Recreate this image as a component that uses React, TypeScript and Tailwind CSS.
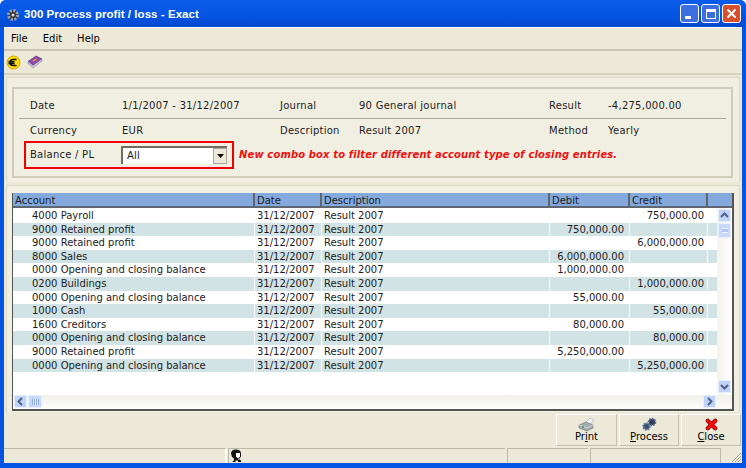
import React from "react";

const rows = [
  ["4000 Payroll", "", "750,000.00"],
  ["9000 Retained profit", "750,000.00", ""],
  ["9000 Retained profit", "", "6,000,000.00"],
  ["8000 Sales", "6,000,000.00", ""],
  ["0000 Opening and closing balance", "1,000,000.00", ""],
  ["0200 Buildings", "", "1,000,000.00"],
  ["0000 Opening and closing balance", "55,000.00", ""],
  ["1000 Cash", "", "55,000.00"],
  ["1600 Creditors", "80,000.00", ""],
  ["0000 Opening and closing balance", "", "80,000.00"],
  ["9000 Retained profit", "5,250,000.00", ""],
  ["0000 Opening and closing balance", "", "5,250,000.00"],
];

const headerCell =
  "h-[15px] bg-[#84aadd] border-r-2 border-b-2 border-[#5f6670] pl-[2px] leading-[16px] overflow-hidden";

function WinButton({ color, children }: { color: string; children: React.ReactNode }) {
  return (
    <div
      className={`w-[19px] h-[19px] rounded-[3px] border border-white flex items-center justify-center ${color}`}
    >
      {children}
    </div>
  );
}

function ScrollBtn({ d }: { d: string }) {
  return (
    <div className="w-[13px] h-[13px] bg-[#c1d3fb] border border-[#e8effd] flex items-center justify-center">
      <svg width="9" height="9" viewBox="0 0 9 9">
        <path d={d} fill="none" stroke="#4d6185" strokeWidth="2" />
      </svg>
    </div>
  );
}

function ToolButton({
  w,
  pre,
  u,
  rest,
  icon,
}: {
  w: string;
  pre?: string;
  u: string;
  rest: string;
  icon: React.ReactNode;
}) {
  return (
    <div
      className={`${w} h-[32px] bg-[#ece9d8] border border-t-white border-l-white border-r-[#c4c1b0] border-b-[#c4c1b0] flex flex-col items-center pt-[2px] leading-[12px] text-[10px] text-black`}
    >
      <div className="h-[14px] flex items-center">{icon}</div>
      <div>
        {pre}
        <span className="underline">{u}</span>
        {rest}
      </div>
    </div>
  );
}

export default function App() {
  return (
    <div
      className="w-[746px] h-[468px] overflow-hidden flex flex-col bg-[#0553e2] rounded-t-[6px] text-[10px] text-[#1c1c1c]"
      style={{ fontFamily: '"DejaVu Sans", Tahoma, sans-serif' }}
    >
      {/* Title bar */}
      <div className="h-[27px] shrink-0 flex items-center pl-[6px] pr-[5px] pt-[3px] bg-gradient-to-b from-[#0a5be8] via-[#0456e4] to-[#0349d0]">
        <svg width="14" height="14" viewBox="0 0 14 14">
          <circle cx="7" cy="7" r="4.500" fill="#333" stroke="#a8a8a8" strokeWidth="3" strokeDasharray="2 1.500" />
          <circle cx="7" cy="7" r="1.500" fill="#ddd" />
        </svg>
        <div
          className="ml-[4px] text-white font-bold text-[11.500px] tracking-[0.05px] whitespace-nowrap"
          style={{ fontFamily: '"Liberation Sans", sans-serif' }}
        >
          300 Process profit / loss - Exact
        </div>
        <div className="ml-auto flex gap-[2px] -mt-[3px]">
          <WinButton color="bg-[#3c6ee0]">
            <div className="w-[6px] h-[3px] bg-white mt-[8px] mr-[3px]" />
          </WinButton>
          <WinButton color="bg-[#3c6ee0]">
            <div className="w-[10px] h-[10px] border border-white border-t-[3px]" />
          </WinButton>
          <WinButton color="bg-[#d8502c]">
            <svg width="11" height="11" viewBox="0 0 11 11">
              <path d="M1.500 1.500l8 8M9.500 1.500l-8 8" stroke="#fff" strokeWidth="2" />
            </svg>
          </WinButton>
        </div>
      </div>

      {/* Window body */}
      <div className="flex-1 mx-[4px] mb-[5px] bg-[#ece9d8] border-t border-white flex flex-col min-h-0">
        {/* Menu */}
        <div className="h-[23px] shrink-0 flex items-center gap-[15px] pl-[7px] border-b-2 border-[#c9c6b6] text-[10px] text-black">
          <span>File</span>
          <span>Edit</span>
          <span>Help</span>
        </div>
        {/* Toolbar */}
        <div className="h-[24px] shrink-0 flex items-center gap-[6px] pl-[2px] border-b-2 border-[#d6d3c3]">
          <svg width="15" height="15" viewBox="0 0 15 15">
            <circle cx="7.500" cy="7.500" r="6.500" fill="#f8dc10" stroke="#e0a800" />
            <path d="M10.500 4.500H7a3 3 0 0 0 0 6h3.500M2.500 6.700h6M2.500 8.400h6" fill="none" stroke="#111" strokeWidth="1.500" />
          </svg>
          <svg width="16" height="14" viewBox="0 0 16 14">
            <path d="M1 6.500l8-5.500 6 3-9 6.500z" fill="#8e4aa8" stroke="#5b2d78" strokeWidth=".7" />
            <path d="M1 6.500v2l5 4.500 9-7V4l-9 6.500z" fill="#d5cbe0" stroke="#7a6a90" strokeWidth=".5" />
            <path d="M6 6l3.500-2" stroke="#f0b020" strokeWidth="1.300" />
          </svg>
        </div>

        {/* Form panel */}
        <div className="mx-[2px] mt-[2px] h-[105px] shrink-0 bg-[#f1efe2] border-t border-l border-r border-[#dcd9c9] pl-[5px] pt-[9px]">
          <div className="w-[721px] h-[91px] border-2 border-[#cfccbc] bg-[#f1efe2] flex flex-col text-[10px] leading-[12px]">
            <div className="h-[30px] shrink-0 pt-[4px] flex items-center mx-[5px] border-b border-[#aca899] tracking-[0.25px]">
              <span className="w-[103px] pl-[11px]">Date</span>
              <span className="w-[158px]">1/1/2007 - 31/12/2007</span>
              <span className="w-[79px]">Journal</span>
              <span className="w-[190px]">90 General journal</span>
              <span className="w-[59px]">Result</span>
              <span>-4,275,000.00</span>
            </div>
            <div className="h-[22px] shrink-0 pt-[1px] flex items-center mx-[5px] tracking-[0.25px]">
              <span className="w-[103px] pl-[11px]">Currency</span>
              <span className="w-[158px]">EUR</span>
              <span className="w-[79px]">Description</span>
              <span className="w-[190px]">Result 2007</span>
              <span className="w-[59px]">Method</span>
              <span>Yearly</span>
            </div>
            <div className="flex items-center">
              <div className="w-[210px] h-[28px] ml-[10px] border-2 border-[#f00000] flex items-center tracking-[0.25px]">
                <span className="w-[95px] pl-[4px]">Balance / PL</span>
                <div className="w-[106px] h-[18px] bg-white border-t-2 border-l-2 border-[#6f6d62] flex items-center justify-between">
                  <span className="pl-[4px]">All</span>
                  <div className="w-[14px] h-[16px] bg-[#ece9d8] border border-[#aca899] flex items-center justify-center">
                    <svg width="7" height="4" viewBox="0 0 7 4"><path d="M0 0h7L3.500 4z" fill="#000" /></svg>
                  </div>
                </div>
              </div>
              <span className="ml-[5px] font-bold italic text-[#f01010] text-[10px] tracking-[0.12px] whitespace-nowrap">
                New combo box to filter different account type of closing entries.
              </span>
            </div>
          </div>
        </div>

        {/* Grid panel */}
        <div className="mx-[2px] mt-[3px] h-[227px] shrink-0 bg-[#f1efe2] border-t border-l border-r border-[#dcd9c9] pl-[5px] pr-[5px] pt-[7px]">
          <div className="h-[218px] border-r-2 border-b-2 border-l border-[#555] bg-white flex flex-col">
            <div className="flex text-[#1a1a1a] shrink-0 h-[15px]">
              <div className={`${headerCell} w-[242px]`}>Account</div>
              <div className={`${headerCell} w-[67px]`}>Date</div>
              <div className={`${headerCell} w-[228px]`}>Description</div>
              <div className={`${headerCell} w-[80px]`}>Debit</div>
              <div className={`${headerCell} w-[78px]`}>Credit</div>
              <div className="h-[15px] flex-1 bg-[#84aadd] border-b-2 border-[#5f6670]" />
            </div>
            <div className="flex-1 flex min-h-0">
              <div className="flex-1 min-w-0 pt-[1px]">
                {rows.map((r, i) => (
                  <div
                    key={i}
                    className={`flex h-[13.6px] leading-[13.6px] ${i % 2 === 1 ? "bg-[#d2e3e5]" : "bg-white"}`}
                  >
                    <div className="w-[242px] pl-[19px] border-r border-white overflow-hidden whitespace-nowrap">{r[0]}</div>
                    <div className="w-[67px] pl-[2px] border-r border-white">31/12/2007</div>
                    <div className="w-[228px] pl-[2px] border-r border-white">Result 2007</div>
                    <div className="w-[80px] pr-[5px] text-right border-r border-white">{r[1]}</div>
                    <div className="w-[78px] pr-[3px] text-right border-r border-white">{r[2]}</div>
                    <div className="flex-1" />
                  </div>
                ))}
              </div>
              <div className="w-[15px] shrink-0 bg-gradient-to-r from-[#f4f3ee] to-[#fdfdfb] flex flex-col items-center pt-[1px] pb-[2px]">
                <ScrollBtn d="M1 6l3.500-3.500L8 6" />
                <div className="w-[13px] h-[15px] mt-[1px] bg-[#c9d8fb] border border-[#e8effd] flex items-center justify-center">
                  <div className="w-[6px] h-[5px] border-y border-[#eef3ff] bg-[#b3c7f5]" />
                </div>
                <div className="flex-1" />
                <ScrollBtn d="M1 3l3.500 3.500L8 3" />
              </div>
            </div>
            <div className="h-[14px] shrink-0 flex bg-gradient-to-b from-[#f1f0ea] to-[#fdfdfb] pl-[1px] pr-[16px]">
              <ScrollBtn d="M6 1L2.500 4.500 6 8" />
              <div className="w-[14px] h-[13px] ml-[1px] bg-[#c9d8fb] border border-[#e8effd] flex items-center justify-center">
                <div className="w-[7px] h-[6px] bg-[repeating-linear-gradient(90deg,#8fa9e6_0_1px,#e4ecfd_1px_2px)]" />
              </div>
              <div className="flex-1" />
              <ScrollBtn d="M3 1l3.500 3.500L3 8" />
            </div>
          </div>
        </div>

        {/* Action buttons */}
        <div className="h-[32px] mt-[2px] shrink-0 flex justify-end gap-[2px] pr-[1px]">
          <ToolButton
            w="w-[61px]"
            pre="Pr"
            u="i"
            rest="nt"
            icon={
              <svg width="18" height="15" viewBox="0 0 18 15">
                <path d="M6 7l6-6 4 2-5 6z" fill="#eef6fa" stroke="#9ab" strokeWidth=".6" />
                <path d="M1 8l7-3 7 3v3l-6 3-8-3z" fill="#a4abad" stroke="#6f7777" strokeWidth=".6" />
                <path d="M1 8l8 3 6-3" fill="none" stroke="#dfe3e3" strokeWidth=".8" />
                <circle cx="5" cy="10" r="1" fill="#2fa04f" />
              </svg>
            }
          />
          <ToolButton
            w="w-[60px]"
            u="P"
            rest="rocess"
            icon={
              <svg width="17" height="15" viewBox="0 0 17 15">
                <circle cx="5.500" cy="9.500" r="3.300" fill="#3d4f6d" stroke="#6f80a0" strokeWidth="2" strokeDasharray="1.500 1" />
                <circle cx="11" cy="5" r="3.300" fill="#2e3c56" stroke="#55688c" strokeWidth="2" strokeDasharray="1.500 1" />
              </svg>
            }
          />
          <ToolButton
            w="w-[60px]"
            u="C"
            rest="lose"
            icon={
              <svg width="13" height="13" viewBox="0 0 14 14">
                <path d="M3 3l8 8M11 3l-8 8" stroke="#600" strokeWidth="4.500" strokeLinecap="round" />
                <path d="M3 3l8 8M11 3l-8 8" stroke="#ee0a0a" strokeWidth="3.500" strokeLinecap="round" />
              </svg>
            }
          />
        </div>

        {/* Status bar */}
        <div className="h-[15px] mt-[2px] shrink-0 flex items-stretch">
          <div className="w-[223px] border-t border-r-2 border-t-[#bdbaa8] border-r-white" />
          <div className="w-[277px] ml-[1px] pl-[1px] border-t border-l border-[#bdbaa8] flex items-end">
            <svg width="13" height="14" viewBox="0 0 13 14">
              <path d="M1 4.500C1 2 3 .500 6 .500s5 1.500 5 4v3l-1.500 2H8v1h2l1.500 2.500h-9L4 11v-1.500L2 8z" fill="#111" />
              <path d="M6 4h4v3.500L8.500 9h-1L6 7.500z" fill="#fff" />
              <path d="M5.500 11.500h2.500v2.500H5.500z" fill="#e8e8e8" />
            </svg>
          </div>
          <div className="w-[81px] ml-[2px] border-t border-l border-[#bdbaa8]" />
          <div className="w-[131px] ml-[2px] border-t border-l border-r border-[#bdbaa8]" />
          <svg className="ml-auto self-end" width="12" height="12" viewBox="0 0 12 12">
            <path d="M11 2L2 11M11 5l-6 6M11 8l-3 3" stroke="#aca899" strokeWidth="1" />
          </svg>
        </div>
      </div>
    </div>
  );
}
